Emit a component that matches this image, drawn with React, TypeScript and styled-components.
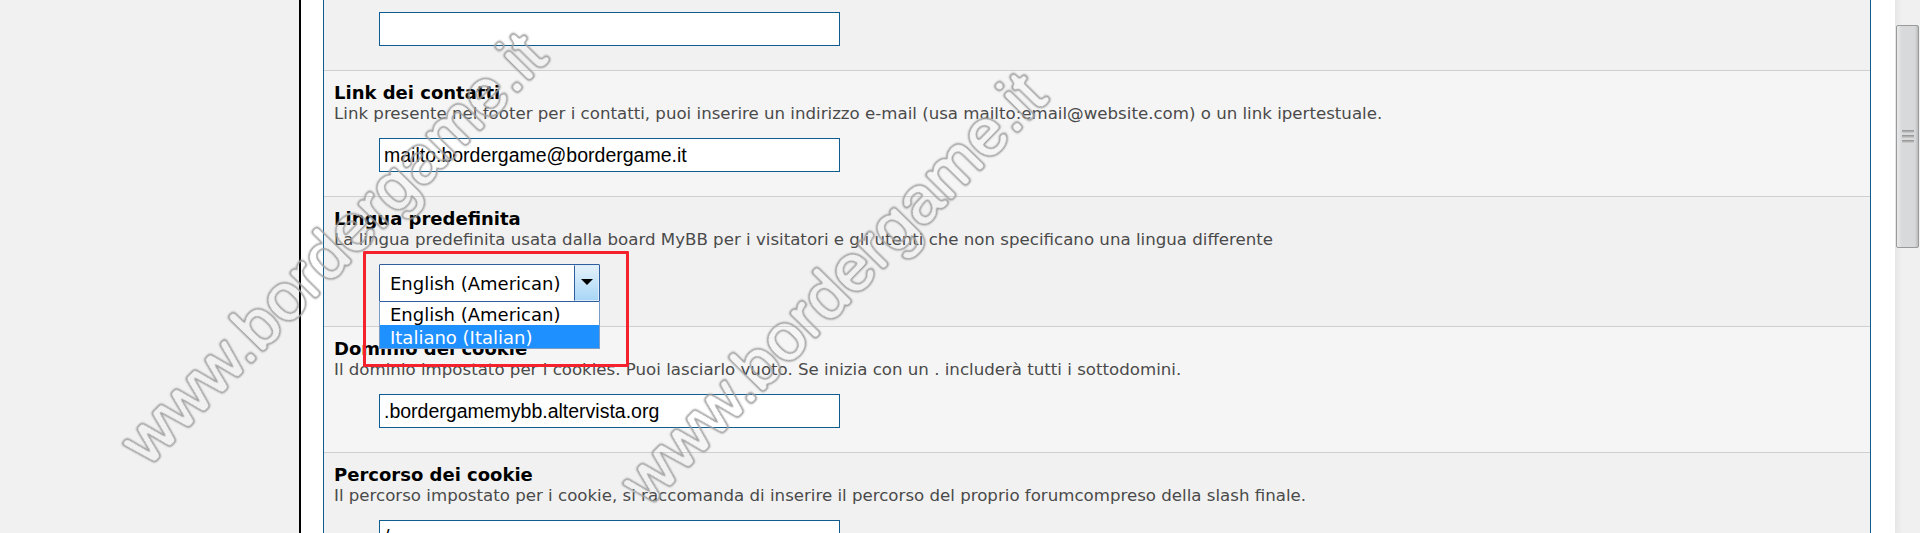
import React from 'react'
import styled, { createGlobalStyle } from 'styled-components'

const GlobalStyle = createGlobalStyle`
  html, body {
    margin: 0;
    padding: 0;
    height: 533px;
    overflow: hidden;
    background: #f1f1f1;
  }
`

const Page = styled.div`
  display: flex;
  position: relative;
  width: 1920px;
  height: 533px;
  overflow: hidden;
  background: #f1f1f1;
`

const Content = styled.div`
  display: flex;
  flex: 1;
  margin-left: 299px;
  padding: 0 24px 0 22px;
  background: #fff;
  border-left: 2px solid #000;
`

const Panel = styled.div`
  flex: 1;
  border-left: 1px solid #0f5c8e;
  border-right: 1px solid #0f5c8e;
`

const Row = styled.div<{ $alt?: boolean; $top?: number }>`
  padding: ${(p) => p.$top ?? 11}px 10px 24px 10px;
  border-bottom: 1px solid #cfcfcf;
  background: ${(p) => (p.$alt ? '#f5f5f5' : '#f1f1f1')};
  &:last-child {
    border-bottom: 0;
  }
`

const Title = styled.div`
  font: bold 18px/21px 'DejaVu Sans', Verdana, sans-serif;
  color: #000;
`

const Description = styled.div`
  font: 16.64px/22px 'DejaVu Sans', Verdana, sans-serif;
  color: #4a4a4a;
  white-space: nowrap;
`

const Field = styled.div<{ $flush?: boolean }>`
  margin: ${(p) => (p.$flush ? '0' : '13px')} 0 0 45px;
  position: relative;
`

const TextInput = styled.div`
  box-sizing: border-box;
  width: 461px;
  height: 34px;
  padding: 0 4px;
  background: #fff;
  border: 1px solid #0f5c8e;
  font: 19.5px/32px 'Liberation Sans', Arial, sans-serif;
  color: #000;
  overflow: hidden;
`

const SelectBox = styled.div`
  box-sizing: border-box;
  display: flex;
  width: 221px;
  height: 38px;
  background: #fff;
  border: 1px solid #2f5f9f;
  border-radius: 1px;
`

const SelectValue = styled.div`
  flex: 1;
  padding: 1px 0 0 10px;
  font: 18px/36px 'DejaVu Sans', Verdana, sans-serif;
  color: #000;
`

const SelectButton = styled.div`
  box-sizing: border-box;
  display: flex;
  align-items: center;
  justify-content: center;
  width: 25px;
  border: 1px solid #dcecf9;
  border-left: 1px solid #2f5f9f;
  background: linear-gradient(#e3f1fb, #a9d6f6);
`

const Arrow = styled.div`
  width: 0;
  height: 0;
  margin-bottom: 2px;
  border-left: 6px solid transparent;
  border-right: 6px solid transparent;
  border-top: 6px solid #000;
`

const OptionList = styled.div`
  position: absolute;
  top: 38px;
  left: 0;
  z-index: 2;
  box-sizing: border-box;
  width: 221px;
  background: #fff;
  border: 1px solid #7a9cc6;
  border-top: 0;
`

const Option = styled.div<{ $active?: boolean }>`
  height: 23px;
  padding: 1px 0 0 10px;
  box-sizing: border-box;
  font: 18px/23px 'DejaVu Sans', Verdana, sans-serif;
  background: ${(p) => (p.$active ? '#1e90ff' : '#fff')};
  color: ${(p) => (p.$active ? '#fff' : '#000')};
`

const Highlight = styled.div`
  position: absolute;
  left: 363px;
  top: 251px;
  z-index: 3;
  box-sizing: border-box;
  width: 266px;
  height: 116px;
  border: 3px solid #f5212c;
  border-radius: 1px;
`

const Watermark = styled.div<{ $x: number; $y: number }>`
  position: absolute;
  left: ${(p) => p.$x}px;
  top: ${(p) => p.$y}px;
  z-index: 4;
  font: 67px/80px 'Liberation Sans', Arial, sans-serif;
  white-space: nowrap;
  color: #000;
  filter: url(#wm-outline);
  transform: rotate(-45.5deg);
  transform-origin: left bottom;
  pointer-events: none;
`

const FilterDefs = styled.svg`
  position: absolute;
  width: 0;
  height: 0;
`

const ScrollBar = styled.div`
  position: relative;
  flex: none;
  width: 25px;
  background: linear-gradient(90deg, #e6e6e6, #f0f0f0 30%);
`

const Thumb = styled.div`
  position: absolute;
  top: 25px;
  left: 1px;
  box-sizing: border-box;
  display: flex;
  flex-direction: column;
  align-items: center;
  justify-content: center;
  gap: 1px;
  width: 23px;
  height: 223px;
  border: 1px solid #9a9a9a;
  border-radius: 2px;
  background: linear-gradient(90deg, #e9e9e9, #d8d9db 25%, #d8d9db 85%, #bcbcbc);
`

const Grip = styled.div`
  width: 12px;
  height: 4px;
  background: linear-gradient(#8f8f8f, #e6e6e6);
`

const App = () => (
  <Page>
    <GlobalStyle />
    {/* blur the glyphs, keep one alpha band: gives the rounded hollow outline of the watermark */}
    <FilterDefs aria-hidden="true">
      <filter id="wm-outline" x="-5%" y="-20%" width="110%" height="140%" colorInterpolationFilters="sRGB">
        <feGaussianBlur in="SourceAlpha" stdDeviation="1.4" result="soft" />
        <feComponentTransfer in="soft" result="band">
          <feFuncA type="table" tableValues="0 0.7 1 0.7 0 0 0 0 0" />
        </feComponentTransfer>
        <feFlood floodColor="#a0a0a0" />
        <feComposite in2="band" operator="in" />
      </filter>
    </FilterDefs>
    <Content>
      <Panel>
        <Row $top={12}>
          <Field $flush>
            <TextInput />
          </Field>
        </Row>
        <Row $alt>
          <Title>Link dei contatti</Title>
          <Description>
            Link presente nel footer per i contatti, puoi inserire un indirizzo e-mail (usa mailto:email@website.com) o un
            link ipertestuale.
          </Description>
          <Field>
            <TextInput>mailto:bordergame@bordergame.it</TextInput>
          </Field>
        </Row>
        <Row>
          <Title>Lingua predefinita</Title>
          <Description>
            La lingua predefinita usata dalla board MyBB per i visitatori e gli utenti che non specificano una lingua
            differente
          </Description>
          <Field>
            <SelectBox>
              <SelectValue>English (American)</SelectValue>
              <SelectButton>
                <Arrow />
              </SelectButton>
            </SelectBox>
            <OptionList>
              <Option>English (American)</Option>
              <Option $active>Italiano (Italian)</Option>
            </OptionList>
          </Field>
        </Row>
        <Row $alt>
          <Title>Dominio dei cookie</Title>
          <Description>
            Il dominio impostato per i cookies. Puoi lasciarlo vuoto. Se inizia con un . includerà tutti i sottodomini.
          </Description>
          <Field>
            <TextInput>.bordergamemybb.altervista.org</TextInput>
          </Field>
        </Row>
        <Row>
          <Title>Percorso dei cookie</Title>
          <Description>
            Il percorso impostato per i cookie, si raccomanda di inserire il percorso del proprio forumcompreso della slash
            finale.
          </Description>
          <Field>
            <TextInput>/</TextInput>
          </Field>
        </Row>
      </Panel>
    </Content>
    <ScrollBar>
      <Thumb>
        <Grip />
        <Grip />
        <Grip />
      </Thumb>
    </ScrollBar>
    <Highlight />
    <Watermark $x={160} $y={400}>www.bordergame.it</Watermark>
    <Watermark $x={660} $y={440}>www.bordergame.it</Watermark>
  </Page>
)

export default App
